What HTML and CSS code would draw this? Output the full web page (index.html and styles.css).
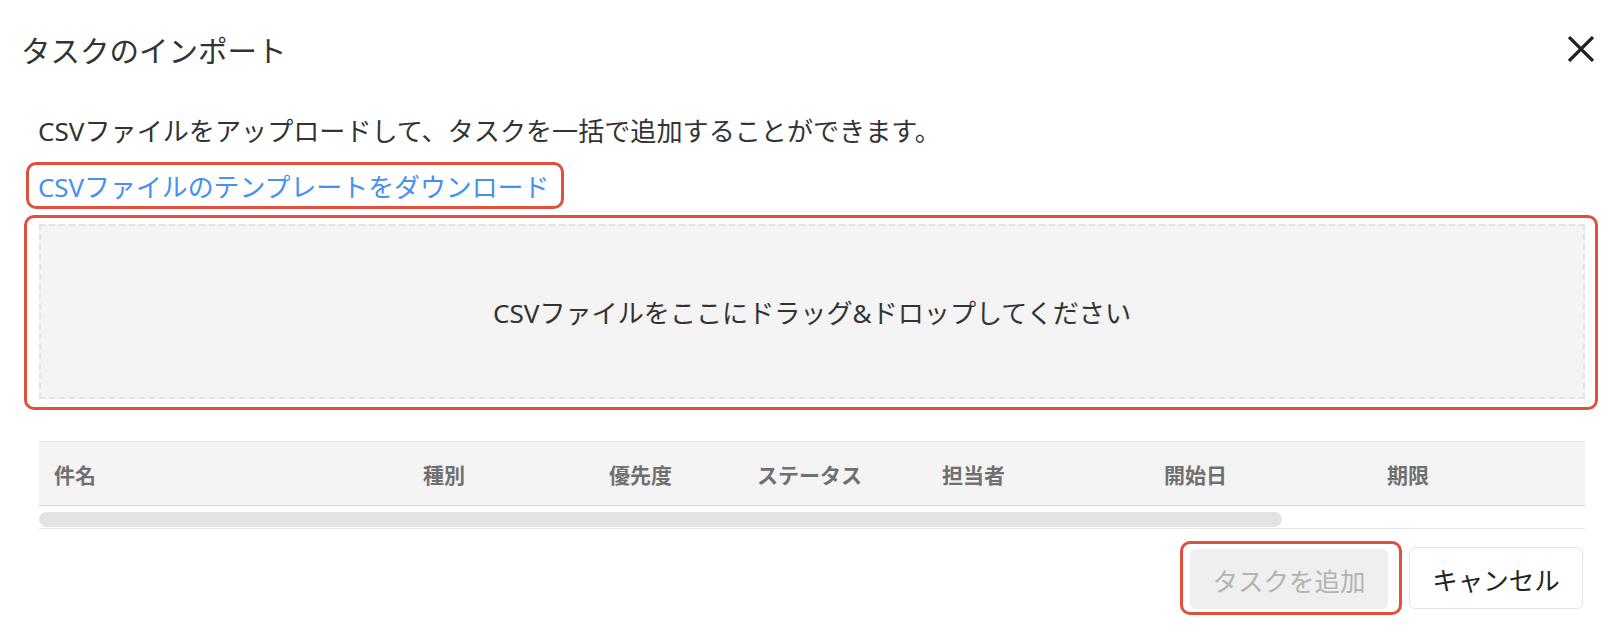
FILE: index.html
```html
<!DOCTYPE html>
<html lang="ja">
<head>
  <meta charset="UTF-8">
  <meta name="viewport" content="width=device-width, initial-scale=1.0">
  <title>タスクのインポート</title>
  <link rel="stylesheet" href="styles.css">
</head>
<body>
  <div class="dialog">
    <header class="dialog-header">
      <h1 class="dialog-title">タスクのインポート</h1>
      <button class="close-btn" aria-label="閉じる">
        <svg width="28" height="26" viewBox="0 0 28 26">
          <path d="M2 1 L26 25 M26 1 L2 25" stroke="#222" stroke-width="3.2" fill="none"/>
        </svg>
      </button>
    </header>

    <div class="dialog-body">
      <p class="lead">CSVファイルをアップロードして、タスクを一括で追加することができます。</p>

      <div class="mark mark-link">
        <a href="#" class="template-link">CSVファイルのテンプレートをダウンロード</a>
      </div>

      <div class="mark mark-drop">
        <div class="dropzone">CSVファイルをここにドラッグ&amp;ドロップしてください</div>
      </div>

      <div class="preview">
        <div class="preview-head">
          <div class="col col-name">件名</div>
          <div class="col col-type">種別</div>
          <div class="col col-prio">優先度</div>
          <div class="col col-status">ステータス</div>
          <div class="col col-owner">担当者</div>
          <div class="col col-start">開始日</div>
          <div class="col col-due">期限</div>
        </div>
        <div class="scroll-track">
          <div class="scroll-thumb"></div>
        </div>
      </div>

      <footer class="dialog-footer">
        <div class="mark mark-btn">
          <button class="btn btn-add" disabled>タスクを追加</button>
        </div>
        <button class="btn btn-cancel">キャンセル</button>
      </footer>
    </div>
  </div>
</body>
</html>
```

FILE: styles.css
```css
body {
  margin: 0;
  background-color: #fff;
  font-family: "Noto Sans", "Noto Sans CJK JP", sans-serif;
  color: #333;
}

.dialog {
  width: 1619px;
  height: 625px;
  overflow: hidden;
}

.dialog-header {
  display: flex;
  justify-content: space-between;
  align-items: center;
  height: 98px;
  padding: 0 24px 0 21px;
}

.dialog-title {
  margin: 0;
  font-size: 29.5px;
  font-weight: normal;
  color: #333;
}

.close-btn {
  display: flex;
  padding: 0;
  border: none;
  background: none;
  cursor: pointer;
}

.dialog-body {
  padding: 0 21px 0 24px;
}

.lead {
  margin: 16px 0 0 14px;
  font-size: 26.1px;
  line-height: 34px;
}

/* red highlight boxes */
.mark {
  border: 3px solid #e0503c;
  border-radius: 10px;
}

.mark-link {
  width: 523px;
  margin: 14px 0 0 2px;
  padding: 0 0 0 9px;
  height: 41px;
  display: flex;
  align-items: center;
}

.template-link {
  color: #4690f0;
  text-decoration: none;
  font-size: 25.9px;
}

.mark-drop {
  margin-top: 6px;
  padding: 6px 10px 8px 12px;
}

.dropzone {
  height: 171px;
  display: flex;
  align-items: center;
  justify-content: center;
  background-color: #f4f4f4;
  border: 2px dashed #e2e3e7;
  font-size: 26.1px;
  color: #333;
}

.preview {
  width: 1546px;
  margin: 31px 0 0 15px;
}

.preview-head {
  display: flex;
  align-items: center;
  height: 63px;
  background-color: #f4f4f4;
  border-top: 1px solid #e6e6e6;
  border-bottom: 1px solid #d4d4d4;
}

.col {
  padding-left: 15px;
  font-size: 21px;
  font-weight: bold;
  color: #707070;
  box-sizing: border-box;
}

.col-name { width: 369px; }
.col-type { width: 186px; }
.col-prio { width: 148px; }
.col-status { width: 185px; }
.col-owner { width: 222px; }
.col-start { width: 223px; }
.col-due { flex: 1; }

.scroll-track {
  margin-top: 6px;
  height: 15px;
  border-bottom: 1px solid #e6e6e6;
  padding-bottom: 1px;
}

.scroll-thumb {
  width: 1243px;
  height: 15px;
  border-radius: 8px;
  background-color: #e3e3e3;
}

.dialog-footer {
  width: 1546px;
  margin: 12px 0 0 15px;
  display: flex;
  justify-content: flex-end;
  align-items: center;
  gap: 7px;
}

.mark-btn {
  padding: 5px 11px 3px 7px;
}

.btn {
  height: 62px;
  border-radius: 6px;
  font-family: "Noto Sans", "Noto Sans CJK JP", sans-serif;
  font-size: 25.5px;
  cursor: pointer;
}

.btn-add {
  width: 198px;
  height: 60px;
  border: none;
  background-color: #efefef;
  color: #b3b3b3;
  cursor: default;
}

.btn-cancel {
  width: 174px;
  margin-right: 2px;
  border: 1px solid #e3e3e3;
  background-color: #fff;
  color: #222;
}
```
